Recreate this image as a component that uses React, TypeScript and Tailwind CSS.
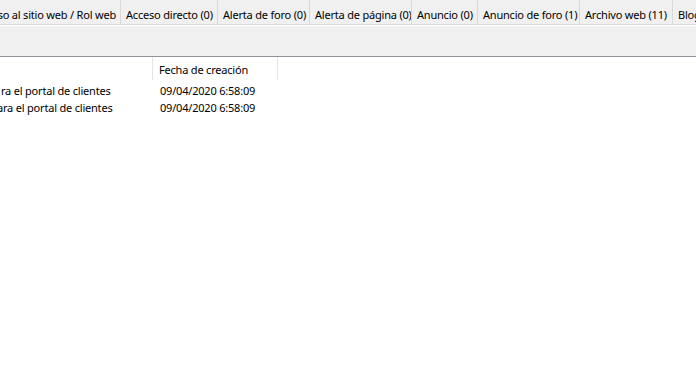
import React from "react";

const tabs: { label: string; w: string }[] = [
  { label: "Acceso directo (0)", w: "w-[97px]" },
  { label: "Alerta de foro (0)", w: "w-[92px]" },
  { label: "Alerta de página (0)", w: "w-[102px]" },
  { label: "Anuncio (0)", w: "w-[66px]" },
  { label: "Anuncio de foro (1)", w: "w-[102px]" },
  { label: "Archivo web (11)", w: "w-[93px]" },
  { label: "Blog (0)", w: "w-[60px]" },
];

export default function App() {
  return (
    <div
      className="w-[696px] h-[376px] overflow-hidden bg-white text-[11px] tracking-[-0.2px] text-black"
      style={{ fontFamily: '"Noto Sans", "Liberation Sans", sans-serif' }}
    >
      {/* tab strip */}
      <div className="h-[25px] flex bg-[#f0f0f0] border-b border-[#d9d9d9] overflow-hidden whitespace-nowrap">
        <div className="w-[121px] shrink-0 border-r border-[#d9d9d9] overflow-hidden flex items-center justify-end pr-[4px] pt-[6px]">
          <span className="whitespace-nowrap">Acceso al sitio web / Rol web</span>
        </div>
        {tabs.map((t) => (
          <div
            key={t.label}
            className={`${t.w} shrink-0 border-r border-[#d9d9d9] overflow-hidden flex items-center pl-[5px] pt-[6px]`}
          >
            {t.label}
          </div>
        ))}
      </div>
      <div className="h-px bg-white" />
      {/* toolbar panel */}
      <div className="h-[31px] bg-[#f0f0f0] border-b border-[#8e9298]" />
      {/* list view */}
      <div className="flex h-[23px]">
        <div className="w-[153px] border-r border-[#e5e5e5]" />
        <div className="w-[125px] border-r border-[#e5e5e5] flex items-center pl-[6px] pt-[3px]">
          Fecha de creación
        </div>
      </div>
      <div className="flex flex-col pt-[3px]">
        {[
          "ra el portal de clientes",
          "ara el portal de clientes",
        ].map((r, i) => (
          <div key={i} className="flex h-[17px] items-center">
            <div className="w-[153px] overflow-hidden whitespace-nowrap">
              <span className={i === 0 ? "pl-[1px]" : "ml-[-3px] inline-block"}>{r}</span>
            </div>
            <div className="pl-[7px]">09/04/2020 6:58:09</div>
          </div>
        ))}
      </div>
    </div>
  );
}
